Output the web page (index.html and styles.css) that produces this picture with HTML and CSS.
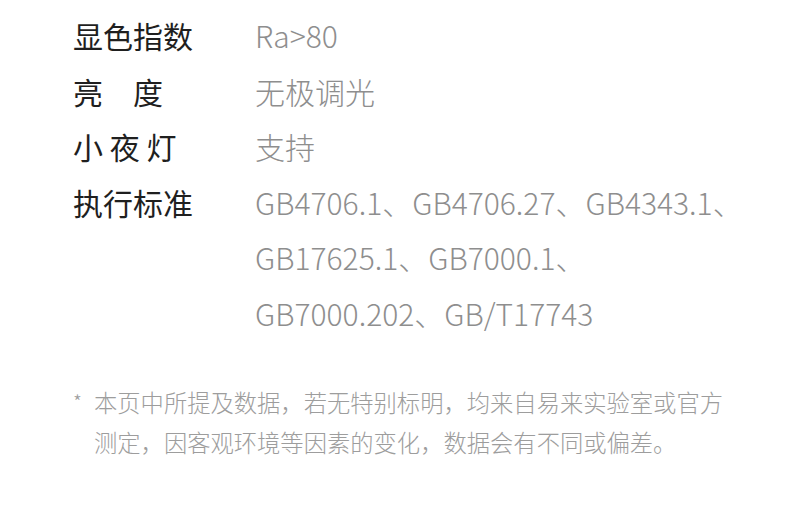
FILE: index.html
```html
<!DOCTYPE html>
<html lang="zh-CN">
<head>
    <meta charset="UTF-8">
    <meta name="viewport" content="width=device-width, initial-scale=1.0">
    <title>规格参数</title>
    <link rel="stylesheet" href="styles.css">
</head>
<body>
    <div class="spec-page">
        <div class="spec-list">
            <div class="spec-row">
                <div class="spec-label">显色指数</div>
                <div class="spec-value">Ra&gt;80</div>
            </div>
            <div class="spec-row">
                <div class="spec-label">亮　度</div>
                <div class="spec-value">无极调光</div>
            </div>
            <div class="spec-row">
                <div class="spec-label">小 夜 灯</div>
                <div class="spec-value">支持</div>
            </div>
            <div class="spec-row">
                <div class="spec-label">执行标准</div>
                <div class="spec-value">
                    GB4706.1、GB4706.27、GB4343.1、<br>
                    GB17625.1、GB7000.1、<br>
                    GB7000.202、GB/T17743
                </div>
            </div>
        </div>

        <div class="note">
            <span class="note-mark">*</span>
            <p class="note-text">本页中所提及数据，若无特别标明，均来自易来实验室或官方测定，因客观环境等因素的变化，数据会有不同或偏差。</p>
        </div>
    </div>
</body>
</html>
```

FILE: styles.css
```css
* {
    margin: 0;
    padding: 0;
    box-sizing: border-box;
}

body {
    font-family: "Noto Sans CJK SC", "Noto Sans", sans-serif;
    background: #fff;
    color: #222;
}

.spec-page {
    padding: 8px 0 0 73px;
}

.spec-row {
    display: flex;
    font-size: 30px;
    line-height: 55.5px;
}

.spec-label {
    width: 182px;
    flex-shrink: 0;
    color: #1f1f1f;
    white-space: pre;
}

.spec-value {
    color: #8e8e8e;
    font-weight: 300;
}

.note {
    display: flex;
    margin-top: 41px;
    width: 660px;
    font-size: 23.3px;
    line-height: 40px;
    color: #9d9d9d;
    font-weight: 300;
}

.note-mark {
    width: 21px;
    flex-shrink: 0;
    font-size: 20px;
}

.note-text {
    flex: 1;
}
```
